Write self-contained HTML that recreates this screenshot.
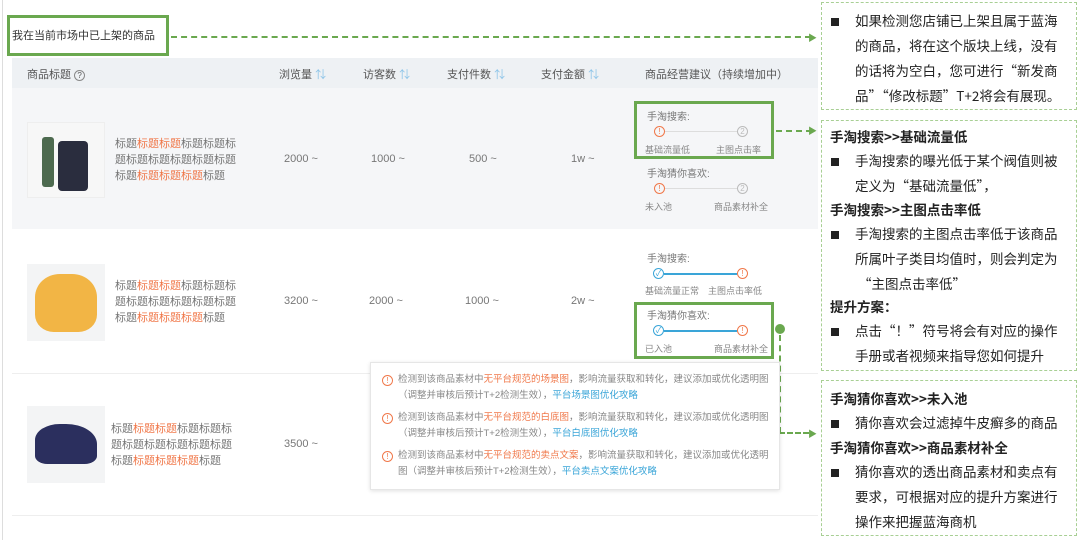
<!DOCTYPE html>
<html><head><meta charset="utf-8"><style>
*{margin:0;padding:0;box-sizing:border-box}
body{width:1080px;height:540px;background:#fff;position:relative;overflow:hidden;font-family:"Liberation Sans","Noto Sans CJK SC",sans-serif;color:#666}
.a{position:absolute;white-space:nowrap}
.o{color:#f0784a}
.t{font-size:11px;line-height:16px;color:#777}
.n{font-size:11px;color:#777}
.h{font-size:11px;color:#555}
.s{font-size:10px;color:#777}
.sm{font-size:9px;color:#888}
.c{position:absolute;width:11px;height:11px;border-radius:50%;border:1px solid #f0784a;font-size:8px;line-height:9px;text-align:center;color:#f0784a}
.g{border-color:#bbb;color:#bbb}
.b{border-color:#3aa5d8;color:#3aa5d8}
.ln{position:absolute;height:1px;background:#ddd}
.lb{height:2px;background:#3aa5d8}
.gb{position:absolute;border:3px solid #6aa84f}
.rp{position:absolute;border:1px dashed #a8cf94;background:#fff}
.r{font-family:"Noto Sans CJK SC",sans-serif;font-size:13.5px;color:#222;line-height:25px;position:absolute;white-space:nowrap}
.r b{font-weight:bold}
.bl{position:absolute;left:9px;width:8px;height:8px;background:#222}
.pp{font-size:9.5px;color:#888;line-height:16px}
.bu{color:#3aa5d8}
.si{color:#8cc4e8}
</style></head><body>
<div class="a" style="left:2px;top:0;width:1px;height:540px;background:#ddd"></div>
<div class="gb" style="left:7px;top:15px;width:162px;height:41px"></div>
<div class="a" style="left:12px;top:27px;font-size:11px;color:#333">我在当前市场中已上架的商品</div>
<div class="a" style="left:171px;top:36px;width:640px;border-top:2px dashed #6aa84f"></div>
<div class="a" style="left:808px;top:31px;font-size:9px;color:#6aa84f">▶</div>

<div class="a" style="left:12px;top:58px;width:806px;height:30px;background:#eef1f4"></div>
<div class="a h" style="left:27px;top:66px">商品标题 <span style="display:inline-block;width:11px;height:11px;border:1px solid #888;border-radius:50%;font-size:8px;line-height:9px;text-align:center">?</span></div>
<div class="a h" style="left:279px;top:66px">浏览量 <span class="si">⇅</span></div>
<div class="a h" style="left:363px;top:66px">访客数 <span class="si">⇅</span></div>
<div class="a h" style="left:447px;top:66px">支付件数 <span class="si">⇅</span></div>
<div class="a h" style="left:541px;top:66px">支付金额 <span class="si">⇅</span></div>
<div class="a h" style="left:645px;top:66px">商品经营建议（持续增加中）</div>

<div class="a" style="left:12px;top:88px;width:806px;height:141px;background:#f5f6f8"></div>
<div class="a" style="left:12px;top:373px;width:806px;height:1px;background:#eee"></div>
<div class="a" style="left:12px;top:515px;width:806px;height:1px;background:#eee"></div>

<!-- row 1 -->
<div class="a" style="left:27px;top:122px;width:78px;height:76px;background:#f7f7f7;border:1px solid #eee">
<div class="a" style="left:14px;top:14px;width:12px;height:50px;background:#4d6a4f;border-radius:3px"></div>
<div class="a" style="left:30px;top:18px;width:30px;height:50px;background:#2a2d3e;border-radius:4px"></div>
</div>
<div class="a t" style="left:115px;top:136px">标题<span class="o">标题标题</span>标题标题标<br>题标题标题标题标题标题<br>标题<span class="o">标题标题标题</span>标题</div>
<div class="a n" style="left:284px;top:153px">2000 ~</div>
<div class="a n" style="left:371px;top:153px">1000 ~</div>
<div class="a n" style="left:469px;top:153px">500 ~</div>
<div class="a n" style="left:571px;top:153px">1w ~</div>

<div class="a s" style="left:647px;top:108px">手淘搜索:</div>
<div class="c" style="left:654px;top:126px">!</div><div class="ln" style="left:665px;top:131px;width:72px"></div><div class="c g" style="left:737px;top:126px">2</div>
<div class="a sm" style="left:645px;top:143px">基础流量低</div><div class="a sm" style="left:716px;top:143px">主图点击率</div>
<div class="a s" style="left:647px;top:165px">手淘猜你喜欢:</div>
<div class="c" style="left:654px;top:183px">!</div><div class="ln" style="left:665px;top:188px;width:72px"></div><div class="c g" style="left:737px;top:183px">2</div>
<div class="a sm" style="left:645px;top:200px">未入池</div><div class="a sm" style="left:714px;top:200px">商品素材补全</div>
<div class="gb" style="left:634px;top:101px;width:140px;height:58px"></div>
<div class="a" style="left:776px;top:130px;width:36px;border-top:2px dashed #6aa84f"></div>
<div class="a" style="left:808px;top:124px;font-size:9px;color:#6aa84f">▶</div>

<!-- row 2 -->
<div class="a" style="left:27px;top:264px;width:78px;height:77px;background:#f3f4f5">
<div class="a" style="left:8px;top:10px;width:62px;height:58px;background:#f2b545;border-radius:40% 40% 30% 30%"></div>
</div>
<div class="a t" style="left:115px;top:278px">标题<span class="o">标题标题</span>标题标题标<br>题标题标题标题标题标题<br>标题<span class="o">标题标题标题</span>标题</div>
<div class="a n" style="left:284px;top:295px">3200 ~</div>
<div class="a n" style="left:369px;top:295px">2000 ~</div>
<div class="a n" style="left:465px;top:295px">1000 ~</div>
<div class="a n" style="left:571px;top:295px">2w ~</div>
<div class="a s" style="left:647px;top:250px">手淘搜索:</div>
<div class="c b" style="left:653px;top:268px">✓</div><div class="ln lb" style="left:664px;top:273px;width:73px"></div><div class="c" style="left:737px;top:268px">!</div>
<div class="a sm" style="left:645px;top:284px">基础流量正常</div><div class="a sm" style="left:708px;top:284px">主图点击率低</div>
<div class="a s" style="left:647px;top:307px">手淘猜你喜欢:</div>
<div class="c b" style="left:653px;top:325px">✓</div><div class="ln lb" style="left:664px;top:330px;width:73px"></div><div class="c" style="left:737px;top:325px">!</div>
<div class="a sm" style="left:645px;top:342px">已入池</div><div class="a sm" style="left:714px;top:342px">商品素材补全</div>
<div class="gb" style="left:634px;top:302px;width:140px;height:57px"></div>
<div class="a" style="left:775px;top:324px;width:10px;height:10px;border-radius:50%;background:#6aa84f"></div>
<div class="a" style="left:779px;top:335px;height:98px;border-left:2px dashed #6aa84f"></div>
<div class="a" style="left:779px;top:432px;width:30px;border-top:2px dashed #6aa84f"></div>
<div class="a" style="left:808px;top:427px;font-size:9px;color:#6aa84f">▶</div>

<!-- row 3 -->
<div class="a" style="left:27px;top:406px;width:78px;height:77px;background:#f3f4f5">
<div class="a" style="left:8px;top:18px;width:62px;height:40px;background:#2b2f5e;border-radius:40% 50% 20% 20%"></div>
</div>
<div class="a t" style="left:111px;top:421px">标题<span class="o">标题标题</span>标题标题标<br>题标题标题标题标题标题<br>标题<span class="o">标题标题标题</span>标题</div>
<div class="a n" style="left:284px;top:438px">3500 ~</div>

<!-- popup -->
<div class="a" style="left:370px;top:362px;width:410px;height:128px;background:#fff;border:1px solid #e6e6e6;box-shadow:0 1px 4px rgba(0,0,0,.12)">
<div class="c" style="left:11px;top:12px">!</div>
<div class="a pp" style="left:27px;top:9px">检测到该商品素材中<span class="o">无平台规范的场景图</span>，影响流量获取和转化，建议添加或优化透明图<br>（调整并审核后预计T+2检测生效），<span class="bu">平台场景图优化攻略</span></div>
<div class="c" style="left:11px;top:50px">!</div>
<div class="a pp" style="left:27px;top:47px">检测到该商品素材中<span class="o">无平台规范的白底图</span>，影响流量获取和转化，建议添加或优化透明图<br>（调整并审核后预计T+2检测生效），<span class="bu">平台白底图优化攻略</span></div>
<div class="c" style="left:11px;top:88px">!</div>
<div class="a pp" style="left:27px;top:85px">检测到该商品素材中<span class="o">无平台规范的卖点文案</span>，影响流量获取和转化，建议添加或优化透明<br>图（调整并审核后预计T+2检测生效），<span class="bu">平台卖点文案优化攻略</span></div>
</div>

<!-- right panels -->
<div class="rp" style="left:821px;top:2px;width:256px;height:108px">
<div class="bl" style="top:15px"></div>
<div class="r" style="left:33px;top:5px">如果检测您店铺已上架且属于蓝海<br>的商品，将在这个版块上线，没有<br>的话将为空白，您可进行“新发商<br>品”“修改标题”T+2将会有展现。</div>
</div>
<div class="rp" style="left:821px;top:120px;width:256px;height:251px">
<div class="r" style="left:8px;top:3px"><b>手淘搜索&gt;&gt;基础流量低</b></div>
<div class="bl" style="top:37px"></div>
<div class="r" style="left:33px;top:27px">手淘搜索的曝光低于某个阀值则被<br>定义为“基础流量低”，</div>
<div class="r" style="left:8px;top:76px"><b>手淘搜索&gt;&gt;主图点击率低</b></div>
<div class="bl" style="top:110px"></div>
<div class="r" style="left:33px;top:100px">手淘搜索的主图点击率低于该商品<br>所属叶子类目均值时，则会判定为<br>&nbsp;“主图点击率低”</div>
<div class="r" style="left:8px;top:173px"><b>提升方案：</b></div>
<div class="bl" style="top:207px"></div>
<div class="r" style="left:33px;top:197px">点击“！”符号将会有对应的操作<br>手册或者视频来指导您如何提升</div>
</div>
<div class="rp" style="left:821px;top:380px;width:256px;height:156px">
<div class="r" style="left:8px;top:5px"><b>手淘猜你喜欢&gt;&gt;未入池</b></div>
<div class="bl" style="top:39px"></div>
<div class="r" style="left:33px;top:29px">猜你喜欢会过滤掉牛皮癣多的商品</div>
<div class="r" style="left:8px;top:54px"><b>手淘猜你喜欢&gt;&gt;商品素材补全</b></div>
<div class="bl" style="top:88px"></div>
<div class="r" style="left:33px;top:78px">猜你喜欢的透出商品素材和卖点有<br>要求，可根据对应的提升方案进行<br>操作来把握蓝海商机</div>
</div>
</body></html>
